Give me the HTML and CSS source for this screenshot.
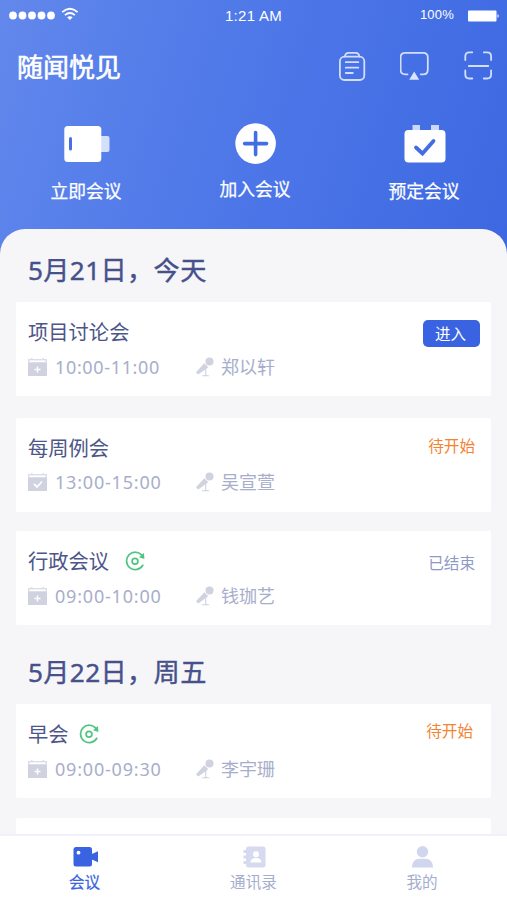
FILE: index.html
```html
<!DOCTYPE html>
<html lang="zh-CN">
<head>
<meta charset="utf-8">
<title>随闻悦见</title>
<link rel="stylesheet" href="styles.css">
</head>
<body>
<svg class="defs" width="0" height="0" aria-hidden="true">
  <symbol id="cal-plus" viewBox="0 0 19 19">
    <path d="M0 1h3V0h1.500v1h10V0H16v1h3v4H0z" opacity=".75"/><path d="M1.500 3.200h16" stroke="#fff" stroke-width="1.600"/>
    <path d="M0 5h19v12.500q0 .5-.5 .5H.5q-.5 0-.5-.5z"/>
    <path d="M9.500 8.500v6M6.500 11.500h6" stroke="#fff" stroke-width="1.400"/>
  </symbol>
  <symbol id="cal-check" viewBox="0 0 19 19">
    <path d="M0 1h3V0h1.500v1h10V0H16v1h3v4H0z" opacity=".75"/><path d="M1.500 3.200h16" stroke="#fff" stroke-width="1.600"/>
    <path d="M0 5h19v12.500q0 .5-.5 .5H.5q-.5 0-.5-.5z"/>
    <path d="M6 11l3 3 5-5.500" fill="none" stroke="#fff" stroke-width="1.800"/>
  </symbol>
  <symbol id="mic" viewBox="0 0 18 20">
    <circle cx="13.500" cy="4.500" r="4"/>
    <path d="M8.300 6.200l4 4L2.200 17.500 0 15.300zM9.200 11.500h1.100v6.500l3 .6v.6H6v-.6l3.200-.6z"/>
  </symbol>
  <symbol id="repeat" viewBox="0 0 20 20">
    <g fill="none" stroke="#50c583" stroke-width="1.700" stroke-linecap="round">
      <path d="M17 4.400A8.700 8.700 0 1 0 17.800 14.300"/><circle cx="10" cy="10.200" r="2.900"/>
    </g>
    <path d="M19 2l.4 6-5.400-1.800z" fill="#50c583"/>
  </symbol>
</svg>
<div class="screen">
  <header class="hero">
    <div class="status">
      <div class="signal">
        <svg width="71" height="16" viewBox="0 0 71 16" fill="#fff">
          <circle cx="4" cy="8.500" r="3.900"/><circle cx="13.500" cy="8.500" r="3.900"/><circle cx="23" cy="8.500" r="3.900"/><circle cx="32.500" cy="8.500" r="3.900"/><circle cx="42" cy="8.500" r="3.900"/>
          <g fill="none" stroke="#fff" stroke-width="1.800"><path d="M53.200 5.100q7.700-6.600 15.400 0M55.900 8.100q5-4.200 10 0"/></g>
          <path d="M58.100 10.300q2.800-2.200 5.600 0l-2.800 2.600z"/>
        </svg>
      </div>
      <div class="clock">1:21 AM</div>
      <div class="power"><span>100%</span>
        <svg width="33" height="12" viewBox="0 0 33 12" fill="#fff"><rect x="1" y=".5" width="28.500" height="11" rx="1"/><path d="M30.500 4q2.500 2 0 4z"/></svg>
      </div>
    </div>
    <div class="titlebar">
      <h1>随闻悦见</h1>
      <div class="tools">
        <svg width="28" height="30" viewBox="0 0 28 30"><rect x="1.900" y="5.700" width="24.400" height="23.300" rx="4.500"/><path d="M7 5.500q.3-3.700 3.500-3.700h7.300q3.200 0 3.500 3.700M7.800 11.200h12.500M7.800 16.700h12.500M7.800 22h7"/></svg>
        <svg width="30" height="30" viewBox="0 0 30 30"><path d="M7.500 23.300H5.200q-4.600 0-4.600-4.600V6.500Q.6 1.900 5.200 1.900h18q4.600 0 4.600 4.600v12.200q0 4.600-4.600 4.600h-2.500"/><path class="solid" d="M14.200 20.500l5 8.300h-10z"/></svg>
        <svg width="28" height="30" viewBox="0 0 28 30"><path d="M1.300 9V5.400q0-4.100 4-4.100h3M19.800 1.300h3.300q4 0 4 4.100V9M1.300 19.500v4q0 4 4 4h3M19.800 27.500h3.300q4 0 4-4v-4M4.800 15h19.500"/></svg>
      </div>
    </div>
    <nav class="actions">
      <a class="action">
        <svg width="48" height="42" viewBox="0 0 48 42"><rect x="37.500" y="13" width="10" height="16" rx="2" fill="#d4dffb"/><rect x="2.300" y="3" width="37" height="36" rx="3.500" fill="#fff"/><rect x="7" y="14" width="3" height="13.500" rx="1.500" fill="#4a70e0"/></svg>
        <span>立即会议</span>
      </a>
      <a class="action raised">
        <svg width="42" height="42" viewBox="0 0 42 42"><circle cx="21.600" cy="20.600" r="20.300" fill="#fff"/><path d="M21.600 9.600v22M10.600 20.600h22" stroke="#426ee2" stroke-width="3.600" stroke-linecap="round"/></svg>
        <span>加入会议</span>
      </a>
      <a class="action">
        <svg width="43" height="42" viewBox="0 0 43 42"><path d="M9.500 2H17v7H9.500zM28 2h8v7h-8z" fill="#cbd8fa"/><rect x="1.500" y="7" width="41" height="32.500" rx="4" fill="#fff"/><path d="M13 24.500l6.500 6L30.500 18" fill="none" stroke="#426ee2" stroke-width="3.800" stroke-linecap="round"/></svg>
        <span>预定会议</span>
      </a>
    </nav>
  </header>
  <main class="sheet">
    <h2>5月21日，今天</h2>
    <article class="card first">
      <div class="top"><h3>项目讨论会</h3><button>进入</button></div>
      <div class="meta"><svg class="cal"><use href="#cal-plus"/></svg><time>10:00-11:00</time><svg class="mic"><use href="#mic"/></svg><span>郑以轩</span></div>
    </article>
    <article class="card second">
      <div class="top"><h3>每周例会</h3><em class="pending">待开始</em></div>
      <div class="meta"><svg class="cal"><use href="#cal-check"/></svg><time>13:00-15:00</time><svg class="mic"><use href="#mic"/></svg><span>吴宣萱</span></div>
    </article>
    <article class="card third">
      <div class="top"><h3>行政会议</h3><svg class="repeat wide"><use href="#repeat"/></svg><em class="ended">已结束</em></div>
      <div class="meta"><svg class="cal"><use href="#cal-plus"/></svg><time>09:00-10:00</time><svg class="mic"><use href="#mic"/></svg><span>钱珈艺</span></div>
    </article>
    <h2 class="next">5月22日，周五</h2>
    <article class="card fourth">
      <div class="top"><h3>早会</h3><svg class="repeat"><use href="#repeat"/></svg><em class="pending">待开始</em></div>
      <div class="meta"><svg class="cal"><use href="#cal-plus"/></svg><time>09:00-09:30</time><svg class="mic"><use href="#mic"/></svg><span>李宇珊</span></div>
    </article>
    <div class="card peek"></div>
  </main>
  <nav class="tabs">
    <a class="tab active">
      <svg width="26" height="22" viewBox="0 0 26 22" fill="#3963e0"><rect x="1.500" y="1" width="18.500" height="19.500" rx="2.500"/><path d="M19 8l2-.5 5-2.300v11l-5-2.200-2-.5z"/><circle cx="6.500" cy="6.700" r="1.900" fill="#fff"/></svg>
      <span>会议</span>
    </a>
    <a class="tab">
      <svg width="24" height="22" viewBox="0 0 24 22" fill="#d5daf0"><rect x="4" y=".5" width="19.500" height="21" rx="2.500"/><path d="M1.500 4h4v3h-4zM1.500 9.500h4v3h-4zM1.500 15h4v3h-4z"/><path d="M8.500 16.500q0-4.500 5.500-4.500t5.500 4.500z" fill="#fff"/><circle cx="14" cy="8.300" r="3" fill="#fff"/></svg>
      <span>通讯录</span>
    </a>
    <a class="tab me">
      <svg width="22" height="22" viewBox="0 0 22 22" fill="#d0d6ee"><circle cx="11.500" cy="5.800" r="5.700"/><path d="M1 21.500q.3-8.700 7.500-8.700h6q7.200 0 7.500 8.700z"/></svg>
      <span>我的</span>
    </a>
  </nav>
</div>
</body>
</html>
```

FILE: styles.css
```css
* { box-sizing: border-box; margin: 0; padding: 0; }
body { font-family: "Noto Sans", "Noto Sans CJK SC", sans-serif; width: 507px; height: 900px; overflow: hidden; }
svg { display: block; flex: none; }
.defs { position: absolute; }
.screen { height: 900px; display: flex; flex-direction: column; background: #f6f6f9 linear-gradient(107deg, #6388ec 0, #567fea 140px, #4a74e7 330px, #3d68e1 555px) 0 0 / 507px 260px no-repeat; }

.hero { height: 229px; flex: none; color: #fff; }
.status { height: 32px; display: grid; grid-template-columns: 1fr auto 1fr; align-items: center; padding: 0 7px 0 9px; font: 15px/20px "Liberation Sans", sans-serif; }
.clock { letter-spacing: .3px; margin-left: -2px; }
.power { display: flex; justify-content: flex-end; align-items: center; gap: 13px; font-size: 13px; letter-spacing: .2px; }
.power span { margin-top: -3px; }
.signal svg { margin-top: -2px; }
.titlebar { height: 68px; display: flex; align-items: center; justify-content: space-between; padding: 0 15px 0 17px; }
h1 { font-size: 26px; line-height: 36px; font-weight: 400; -webkit-text-stroke: .6px #fff; margin-top: 2px; }
.tools { display: flex; gap: 34px; fill: none; stroke: #d3defb; stroke-width: 1.8; stroke-linecap: round; }
.tools .solid { fill: #dbe4fd; stroke: none; }
.actions { height: 129px; display: grid; grid-template-columns: repeat(3, 169px); padding-top: 23px; }
.action { display: flex; flex-direction: column; align-items: center; gap: 14px; padding-left: 3px; }
.action span { font-size: 17.8px; line-height: 24px; -webkit-text-stroke: .25px #fff; }
.action.raised { gap: 12px; }

.sheet { height: 605px; flex: none; overflow: hidden; background: #f6f6f9; border-radius: 25px 25px 0 0; padding: 23px 16px 0; }
h2 { height: 36px; margin: 0 0 14px 12px; font-size: 26.2px; line-height: 36px; letter-spacing: .35px; font-weight: 400; color: #46518b; -webkit-text-stroke: .4px #46518b; white-space: nowrap; }
h2.next { margin: 29px 0 14px 12px; }
.card { height: 94px; background: #fff; padding: 15px 16px 0 12px; border-radius: 2px; }
.second { margin-top: 22px; }
.third { margin-top: 19px; }
.peek { margin-top: 20px; }
.top { display: flex; align-items: center; height: 30px; }
h3 { font-size: 20.3px; line-height: 30px; font-weight: 400; color: #4d5688; }
.top em { margin-left: auto; font-style: normal; font-size: 15.6px; line-height: 22px; }
.pending { color: #f58332; margin-top: -4px; }
.fourth .pending { margin-right: 2px; margin-top: -6px; }
.ended { color: #8e99c8; margin-top: 3px; }
button { margin-left: auto; margin-right: -5px; width: 57px; height: 27px; margin-top: 2px; border: 0; border-radius: 5px; background: #3963e0; color: #fff; font: 15.5px/27px "Noto Sans CJK SC", sans-serif; padding-right: 2px; }
.repeat { width: 20px; height: 20px; margin-left: 10px; }
.repeat.wide { margin-left: 16px; }
.meta { display: flex; align-items: center; height: 26px; margin-top: 7px; font-size: 18px; line-height: 26px; color: #a7aecb; fill: #d0d3df; }
.meta time { width: 149px; padding-left: 8px; letter-spacing: .8px; }
.second .meta { margin-top: 6px; }
.cal { width: 19px; height: 19px; }
.mic { width: 18px; height: 20px; margin-right: 7px; }
.first .meta time { letter-spacing: .65px; }

.tabs { height: 66px; flex: none; background: #fff; border-top: 2px solid #f0f1fc; display: grid; grid-template-columns: repeat(3, 169px); padding-top: 10px; }
.tab { display: flex; flex-direction: column; align-items: center; gap: 3px; font-size: 15.6px; line-height: 22px; color: #a5adce; }
.tab.active { color: #3963e0; -webkit-text-stroke: .2px #3963e0; }
.tab.me { padding-right: 1px; }
```
